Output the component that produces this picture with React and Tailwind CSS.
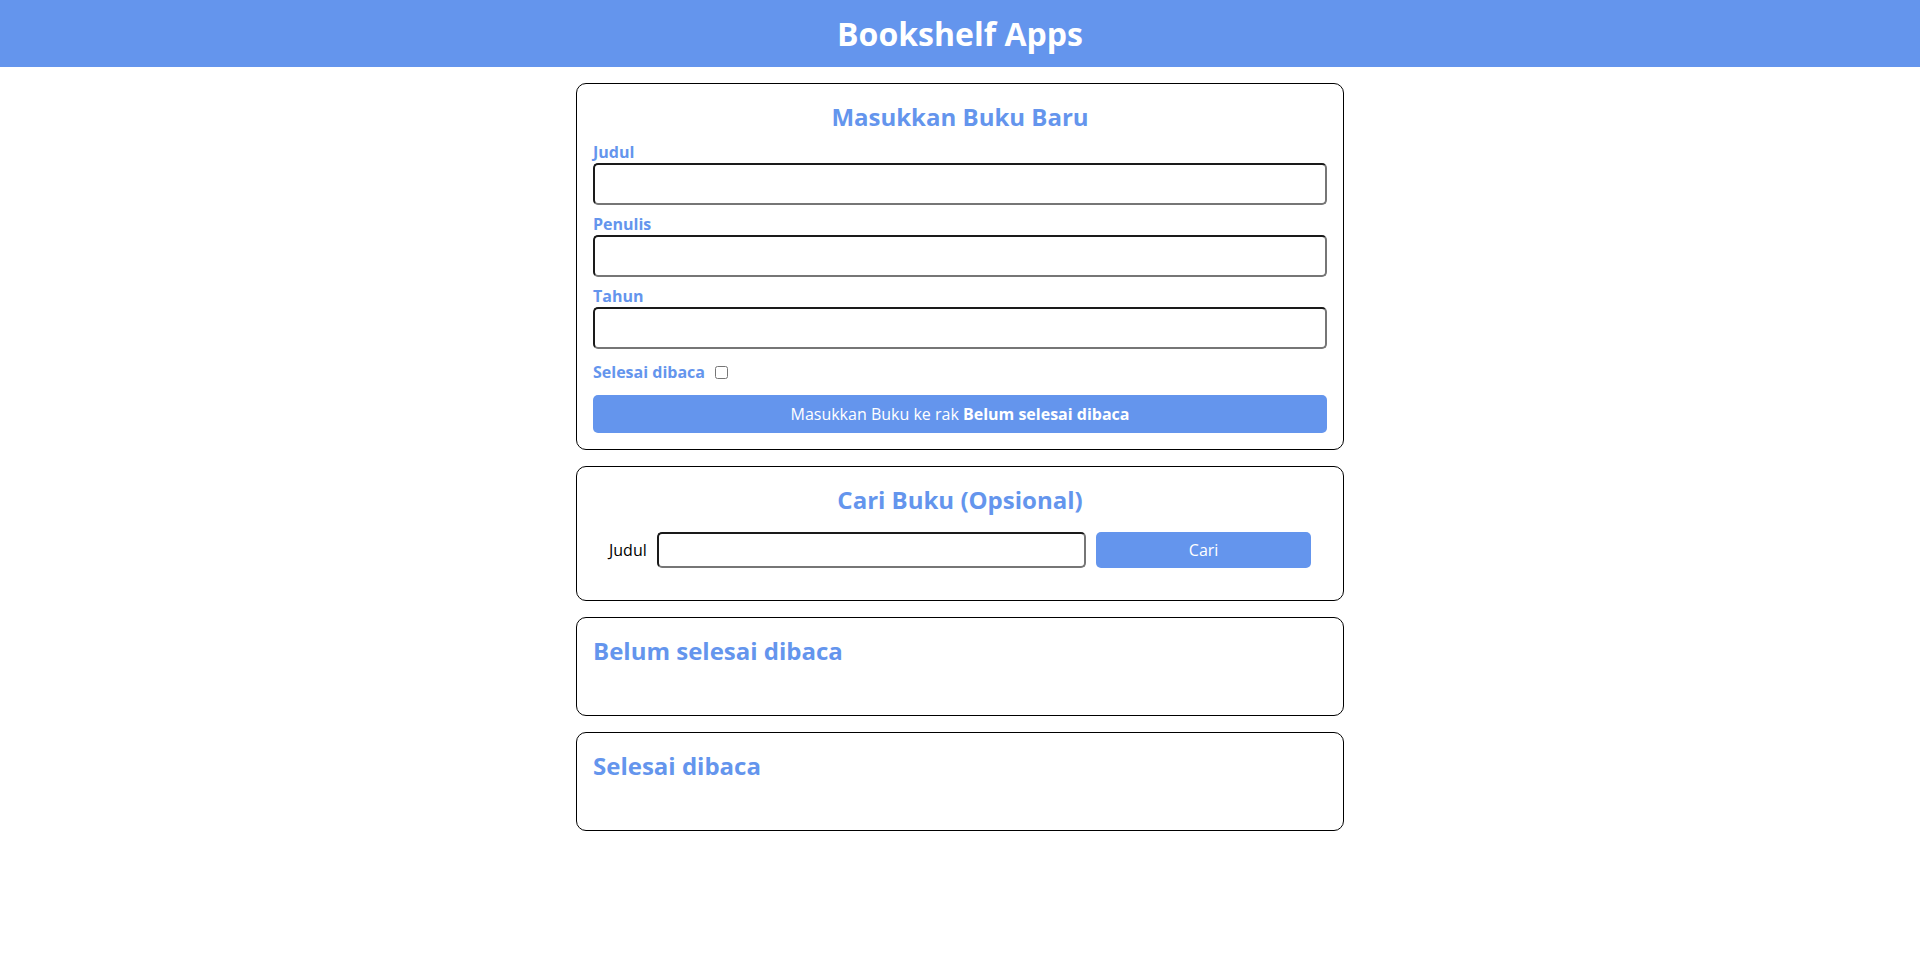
import { useState } from 'react';

const inputCls =
  'block w-full rounded-[5px] border-2 border-t-[#1a1a1a] border-l-[#1a1a1a] border-b-[#767676] border-r-[#767676] bg-white p-2 text-base leading-[22px] outline-none';

export default function App() {
  const [form, setForm] = useState({ title: '', author: '', year: '', isComplete: false });
  const [query, setQuery] = useState('');

  const update = (key) => (e) =>
    setForm({ ...form, [key]: e.target.type === 'checkbox' ? e.target.checked : e.target.value });

  return (
    <div className="min-h-screen bg-white font-['Open_Sans',sans-serif] text-black">
      {/* Header */}
      <header className="flex h-[67px] items-center justify-center bg-[#6495ed] text-white">
        <h1 className="text-[32px] font-bold leading-[44px]">Bookshelf Apps</h1>
      </header>

      <main className="mx-auto w-4/5 max-w-[800px] p-4">
        {/* Input buku */}
        <section className="flex flex-col rounded-[10px] border border-black p-4">
          <h2 className="text-center text-2xl font-bold leading-[33px] text-[#6495ed]">Masukkan Buku Baru</h2>
          <form onSubmit={(e) => e.preventDefault()} className="flex flex-col">
            <div className="mt-2">
              <label htmlFor="inputBookTitle" className="block font-bold leading-[22px] text-[#6495ed]">Judul</label>
              <input id="inputBookTitle" type="text" value={form.title} onChange={update('title')} className={inputCls} />
            </div>
            <div className="mt-2">
              <label htmlFor="inputBookAuthor" className="block font-bold leading-[22px] text-[#6495ed]">Penulis</label>
              <input id="inputBookAuthor" type="text" value={form.author} onChange={update('author')} className={inputCls} />
            </div>
            <div className="mt-2">
              <label htmlFor="inputBookYear" className="block font-bold leading-[22px] text-[#6495ed]">Tahun</label>
              <input id="inputBookYear" type="number" value={form.year} onChange={update('year')} className={inputCls} />
            </div>
            <div className="my-3 flex items-center">
              <label htmlFor="inputBookIsComplete" className="mr-[10px] font-bold leading-[22px] text-[#6495ed]">Selesai dibaca</label>
              <input id="inputBookIsComplete" type="checkbox" checked={form.isComplete} onChange={update('isComplete')} className="m-0 h-[13px] w-[13px]" />
            </div>
            <button type="submit" className="block w-full cursor-pointer rounded-[5px] bg-[#6495ed] p-2 text-base leading-[22px] text-white">
              Masukkan Buku ke rak <span className="font-bold">{form.isComplete ? 'Selesai dibaca' : 'Belum selesai dibaca'}</span>
            </button>
          </form>
        </section>

        {/* Cari buku */}
        <section className="my-4 flex flex-col items-center rounded-[10px] border border-black p-4">
          <h2 className="text-2xl font-bold leading-[33px] text-[#6495ed]">Cari Buku (Opsional)</h2>
          <form onSubmit={(e) => e.preventDefault()} className="grid w-full grid-cols-[auto_1fr_0.5fr] gap-[10px] p-4">
            <label htmlFor="searchBookTitle" className="flex items-center leading-[22px]">Judul</label>
            <input
              id="searchBookTitle"
              type="text"
              value={query}
              onChange={(e) => setQuery(e.target.value)}
              className="rounded-[5px] border-2 border-t-[#1a1a1a] border-l-[#1a1a1a] border-b-[#767676] border-r-[#767676] p-[5px] leading-[22px] outline-none"
            />
            <button type="submit" className="cursor-pointer rounded-[5px] bg-[#6495ed] text-white">Cari</button>
          </form>
        </section>

        {/* Rak */}
        <section className="mt-4 rounded-[10px] border border-black p-4">
          <h2 className="text-2xl font-bold leading-[33px] text-[#6495ed]">Belum selesai dibaca</h2>
          <div className="p-4"></div>
        </section>
        <section className="mt-4 rounded-[10px] border border-black p-4">
          <h2 className="text-2xl font-bold leading-[33px] text-[#6495ed]">Selesai dibaca</h2>
          <div className="p-4"></div>
        </section>
      </main>
    </div>
  );
}
